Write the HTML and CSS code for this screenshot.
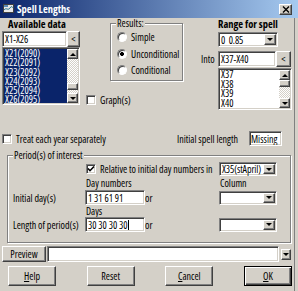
FILE: index.html
```html
<!DOCTYPE html>
<html lang="en">
<head>
  <meta charset="UTF-8">
  <meta name="viewport" content="width=device-width, initial-scale=1.0">
  <title>Spell Lengths</title>
  <link rel="stylesheet" href="styles.css">
</head>
<body>
  <div class="window">
    <!-- Barra de título -->
    <div class="titlebar">
      <svg class="app-icon" viewBox="0 0 11 10" width="11" height="10">
        <rect x="0.5" y="0.5" width="10" height="8" fill="#e8e8e8" stroke="#404040"/>
        <path d="M1 6c2-3 4 1 6-2s3 0 3 0" stroke="#1c6f8c" fill="none"/>
        <rect x="1" y="1" width="4" height="2" fill="#5a8bb8"/>
      </svg>
      <span class="title">Spell Lengths</span>
      <span class="btn-close">
        <svg viewBox="0 0 8 7" width="8" height="7"><path d="M1 0.5l6 6M7 0.5l-6 6" stroke="#000" stroke-width="1.4"/></svg>
      </span>
    </div>

    <div class="dialog">
      <div class="top">
        <!-- Dados disponíveis -->
        <div class="col-data">
          <div class="heading">Available data</div>
          <div class="pick">
            <div class="textbox field-data">X1-X26</div>
            <span class="btn btn-pick">&lt;</span>
          </div>
          <div class="listbox list-data">
            <ul class="items selected">
              <li>X21(2090)</li>
              <li>X22(2091)</li>
              <li>X23(2092)</li>
              <li>X24(2093)</li>
              <li>X25(2094)</li>
              <li>X26(2095)</li>
            </ul>
            <div class="scrollbar">
              <span class="btn sb-btn"><i class="arrow-up"></i></span>
              <div class="sb-track"><span class="btn sb-thumb thumb-low"></span></div>
              <span class="btn sb-btn"><i class="arrow-down"></i></span>
            </div>
          </div>
        </div>

        <!-- Resultados -->
        <div class="col-mid">
          <fieldset class="group results">
            <legend>Results:</legend>
            <label class="radio"><span class="dot"></span>Simple</label>
            <label class="radio"><span class="dot on"></span>Unconditional</label>
            <label class="radio"><span class="dot"></span>Conditional</label>
          </fieldset>
          <label class="check graph"><span class="box"></span>Graph(s)</label>
        </div>

        <!-- Intervalo -->
        <div class="col-range">
          <div class="heading heading-range">Range for spell</div>
          <div class="combo combo-range">
            <span class="combo-text">0  0.85</span>
            <span class="btn combo-btn"><i class="arrow-down"></i></span>
          </div>
          <div class="into">
            <span class="into-label">Into</span>
            <div class="textbox field-into">X37-X40</div>
            <span class="btn btn-into">&lt;</span>
          </div>
          <div class="listbox list-into">
            <ul class="items">
              <li>X37</li>
              <li>X38</li>
              <li>X39</li>
              <li>X40</li>
            </ul>
            <div class="scrollbar">
              <span class="btn sb-btn"><i class="arrow-up"></i></span>
              <div class="sb-track"><span class="btn sb-thumb"></span></div>
              <span class="btn sb-btn"><i class="arrow-down"></i></span>
            </div>
          </div>
        </div>
      </div>

      <div class="treat-row">
        <label class="check"><span class="box"></span>Treat each year separately</label>
        <span class="spell-label">Initial spell length</span>
        <div class="textbox field-missing">Missing</div>
      </div>

      <!-- Período de interesse -->
      <fieldset class="group period">
        <legend>Period(s) of interest</legend>
        <div class="period-grid">
          <label class="check relative"><span class="box"><svg viewBox="0 0 8 8" width="8" height="8"><path d="M1 3.5l2 2.2L7 1.5" stroke="#000" stroke-width="1.6" fill="none"/></svg></span>Relative to initial day numbers in</label>
          <div class="combo combo-col">
            <span class="combo-text">X35(stApril)</span>
            <span class="btn combo-btn"><i class="arrow-down"></i></span>
          </div>

          <span class="sub-label day-label">Day numbers</span>
          <span class="sub-label col-label">Column</span>

          <span class="row-label">Initial day(s)</span>
          <div class="textbox field-days">1 31 61 91</div>
          <span class="or">or</span>
          <div class="combo combo-col">
            <span class="combo-text"></span>
            <span class="btn combo-btn"><i class="arrow-down"></i></span>
          </div>

          <span class="sub-label day-label">Days</span>

          <span class="row-label">Length of period(s)</span>
          <div class="textbox field-days">30 30 30 30<span class="caret"></span></div>
          <span class="or">or</span>
          <div class="combo combo-col">
            <span class="combo-text"></span>
            <span class="btn combo-btn"><i class="arrow-down"></i></span>
          </div>
        </div>
      </fieldset>

      <div class="preview-row">
        <span class="btn btn-preview">Preview</span>
        <div class="textbox field-preview"></div>
        <span class="btn btn-mini"><i class="arrow-down"></i></span>
      </div>

      <div class="buttons">
        <span class="btn btn-action"><u>H</u>elp</span>
        <span class="btn btn-action">Reset</span>
        <span class="btn btn-action"><u>C</u>ancel</span>
        <span class="btn btn-action btn-default"><u>O</u>K</span>
      </div>
    </div>
  </div>
</body>
</html>
```

FILE: styles.css
```css
* {
  margin: 0;
  padding: 0;
  box-sizing: border-box;
}

body {
  background-color: #d4d0c8;
  color: #000;
  font-family: "Open Sans", "Liberation Sans", Arial, sans-serif;
  font-stretch: 75%;
  font-size: 10px;
  line-height: 1;
}

.window {
  width: 298px;
  height: 291px;
  overflow: hidden;
  background-color: #d4d0c8;
}

/* Barra de título */
.titlebar {
  height: 18px;
  display: flex;
  align-items: center;
  padding: 0 6px 0 3px;
  background: linear-gradient(to right, #0a246a, #a6caf0);
  color: #fff;
}

.app-icon {
  margin-right: 3px;
}

.title {
  flex: 1;
  font-weight: bold;
  font-size: 10.5px;
}

.btn-close {
  width: 13px;
  height: 11px;
  display: flex;
  align-items: center;
  justify-content: center;
  background-color: #d4d0c8;
  border: 1px solid;
  border-color: #fff #404040 #404040 #fff;
  box-shadow: inset -1px -1px #808080;
}

.dialog {
  width: 295px;
  height: 273px;
  padding-left: 2px;
  border-right: 1px solid #808080;
}

/* Elementos 3D */
.btn {
  display: flex;
  align-items: center;
  justify-content: center;
  flex-shrink: 0;
  background-color: #d4d0c8;
  border: 1px solid;
  border-color: #fff #404040 #404040 #fff;
  box-shadow: inset -1px -1px #808080;
  white-space: nowrap;
}

.textbox,
.listbox,
.combo {
  background-color: #fff;
  border: 1px solid;
  border-color: #808080 #fff #fff #808080;
  box-shadow: inset 1px 1px #404040, inset -1px -1px #d4d0c8;
  white-space: nowrap;
}

.textbox,
.listbox {
  overflow: hidden;
}

.textbox {
  display: flex;
  align-items: center;
  padding-left: 2px;
}

.arrow-up,
.arrow-down {
  width: 0;
  height: 0;
  border-left: 3px solid transparent;
  border-right: 3px solid transparent;
}

.arrow-up {
  border-bottom: 3px solid #000;
}

.arrow-down {
  border-top: 3px solid #000;
}

.top {
  display: flex;
  height: 92px;
}

.heading {
  height: 13px;
  line-height: 13px;
  padding-left: 6px;
  font-weight: bold;
  font-size: 10.5px;
  white-space: nowrap;
}

/* Coluna de dados */
.col-data {
  width: 78px;
}

.pick {
  display: flex;
  height: 16px;
}

.field-data {
  width: 65px;
}

.btn-pick {
  width: 13px;
}

.listbox {
  display: flex;
  padding: 1px;
}

.list-data {
  height: 58px;
}

.items {
  flex: 1;
  list-style: none;
}

.items li {
  height: 9.3px;
  line-height: 9.3px;
  padding-left: 1px;
}

.items.selected {
  background-color: #0a246a;
  color: #fff;
}

.scrollbar {
  width: 11px;
  display: flex;
  flex-direction: column;
}

.sb-btn {
  height: 10px;
}

.sb-track {
  flex: 1;
  background: repeating-conic-gradient(#d4d0c8 0 25%, #fff 0 50%) 0 0 / 2px 2px;
}

.sb-thumb {
  height: 7px;
}

.thumb-low {
  margin-top: 24px;
}

/* Coluna do meio */
.col-mid {
  width: 98px;
  margin-left: 6px;
}

.group {
  border: 1px solid #808080;
  box-shadow: inset 1px 1px #fff, 1px 1px #fff;
  min-inline-size: 0;
  padding: 0 0 0 5px;
}

.group legend {
  line-height: 10px;
  padding: 0 1px;
  background-color: #d4d0c8;
}

.results {
  width: 73px;
  margin-left: 24px;
  padding-top: 1px;
  padding-bottom: 1px;
}

.radio {
  height: 16.5px;
  display: flex;
  align-items: center;
  white-space: nowrap;
}

.dot {
  flex-shrink: 0;
  width: 10px;
  height: 10px;
  margin: 0 4px 0 1px;
  border-radius: 50%;
  background-color: #fff;
  border: 1px solid;
  border-color: #808080 #fff #fff #808080;
  box-shadow: inset 1px 1px #404040;
}

.dot.on {
  background: radial-gradient(circle, #000 0 1.8px, #fff 2.2px);
}

.check {
  display: flex;
  align-items: center;
  white-space: nowrap;
}

.box {
  flex-shrink: 0;
  width: 10px;
  height: 10px;
  margin-right: 4px;
  display: flex;
  align-items: center;
  justify-content: center;
  background-color: #fff;
  border: 1px solid;
  border-color: #808080 #fff #fff #808080;
  box-shadow: inset 1px 1px #404040, inset -1px -1px #d4d0c8;
}

.graph {
  margin-top: 14px;
  height: 10px;
}

/* Coluna de intervalo */
.col-range {
  width: 92px;
  margin-left: 17px;
}

.heading-range {
  height: 14px;
  line-height: 12px;
  padding-left: 17px;
}

.combo {
  display: flex;
  align-items: center;
  padding: 1px 1px 1px 2px;
}

.combo-text {
  flex: 1;
  white-space: pre;
  letter-spacing: -0.1px;
}

.combo-btn {
  width: 12px;
  height: 100%;
}

.combo-range {
  width: 60px;
  height: 15px;
  margin-left: 17px;
}

.into {
  display: flex;
  align-items: center;
  height: 16px;
  margin-top: 4px;
}

.into-label {
  width: 17px;
}

.field-into {
  width: 58px;
  height: 16px;
}

.btn-into {
  width: 15px;
  height: 16px;
}

.list-into {
  width: 74px;
  height: 42px;
  margin: 1px 0 0 17px;
}

.list-into .items li {
  height: 9.6px;
  line-height: 9.6px;
}

/* Linha de tratamento */
.treat-row {
  display: flex;
  align-items: center;
  height: 15px;
  margin-top: 21px;
  padding-right: 12px;
}

.treat-row .check {
  flex: 1;
}

.spell-label {
  margin-right: 11px;
}

.field-missing {
  width: 33px;
  height: 15px;
  padding-left: 1px;
}

/* Período */
.period {
  width: 284px;
  margin: 4px 0 0 5px;
  padding: 2px 13px 10px 5px;
}

.period-grid {
  display: grid;
  grid-template-columns: 72px 60px 1fr 13px 58px;
  grid-template-rows: 14px 14px 15px 12px 15px;
  align-items: center;
}

.relative {
  grid-column: 2 / 5;
  padding-left: 1px;
}

.combo-col {
  grid-column: 5;
  height: 14px;
}

.sub-label {
  padding-left: 1px;
}

.day-label {
  grid-column: 2;
}

.col-label {
  grid-column: 5;
}

.row-label {
  grid-column: 1;
  white-space: nowrap;
}

.field-days {
  grid-column: 2;
  height: 15px;
}

.caret {
  width: 1px;
  height: 10px;
  background-color: #000;
}

/* Pré-visualização */
.preview-row {
  display: flex;
  align-items: center;
  height: 16px;
  margin-top: 3px;
}

.btn-preview {
  width: 44px;
  height: 16px;
}

.field-preview {
  width: 232px;
  height: 16px;
  margin-left: 1px;
}

.btn-mini {
  width: 10px;
  height: 11px;
  margin-left: 2px;
}

/* Botões */
.buttons {
  display: flex;
  justify-content: space-between;
  margin-top: 4px;
  padding: 0 2px 0 6px;
}

.btn-action {
  width: 48px;
  height: 20px;
}

.btn-default {
  border: 1px solid #000;
  box-shadow: inset 1px 1px #fff, inset -1px -1px #404040, inset -2px -2px #808080;
}
```
